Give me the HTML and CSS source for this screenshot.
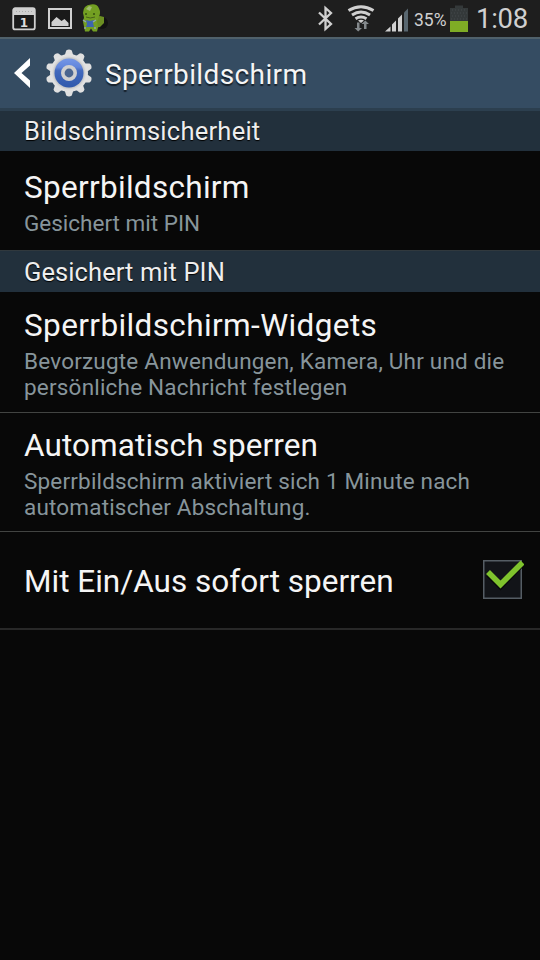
FILE: index.html
```
<!DOCTYPE html>
<html lang="de">
<head>
<meta charset="utf-8">
<title>Sperrbildschirm</title>
<link rel="stylesheet" href="styles.css">
</head>
<body>
<div class="statusbar">
  <svg class="notifications" width="112" height="37" viewBox="0 0 112 37">
    <rect x="13.2" y="8.2" width="21.6" height="21.2" rx="2" fill="#1a1a1a" stroke="#d0d0d0" stroke-width="1.8"/>
    <path d="M13 9h22v6H13z" fill="#d0d0d0"/>
    <path d="M16 11.500h17" stroke="#aaa" stroke-dasharray="1 2"/>
    <text x="24" y="26.500" class="day">1</text>
    <rect x="49" y="9" width="22" height="19" fill="#1a1a1a" stroke="#d0d0d0" stroke-width="2"/>
    <path d="M51.500 26v-4l5-5 5 4 3-2 4 4v3z" fill="#d0d0d0"/>
    <ellipse cx="102" cy="23" rx="6" ry="6" fill="#121212"/>
    <path d="M94 17l6-1 4 1v6l-4 4-5 1z" fill="#6c8f22"/>
    <path d="M83 13q0-8 8-8.500q6-1 8 4 2 4 0 8l-2 5 1 6-1 4h-4l-2-3-2 3h-4l-1-5-1-5 1-4z" fill="#739f22"/>
    <path d="M86 9l3-3 3 1-2 4z" fill="#a2bc72"/>
    <path d="M85 14h2m6 0h2" stroke="#35500f" stroke-width="1.500"/>
    <path d="M86 17q4 2 9 0" stroke="#46601a" fill="none"/>
    <path d="M86 20l4 1 4-1-1 3 1 4h-8l1-3z" fill="#3d65ae"/>
    <path d="M83 20l3 2m7 0l3-2M84 28h2m8 0h2" stroke="#8da4b0" stroke-width="1.500"/>
  </svg>
  <div class="system">
    <svg width="98" height="37" viewBox="0 0 98 37">
      <path d="M7 12.500L19 24l-5.500 5V8l5.500 5L7 24.500" fill="none" stroke="#d0d0d0" stroke-width="2.300"/>
      <g fill="none" stroke="#d0d0d0" stroke-width="3">
        <path d="M36.500 10.500q12.500-7.500 25 0"/>
        <path d="M40 15q9-6 18 0"/>
        <path d="M43.500 18.800q5.500-3.500 11 0"/>
      </g>
      <path d="M46 20.500q3-1.500 6 0l-3 2.500z" fill="#d0d0d0"/>
      <path d="M45 22.500h2.500V28H50l-3.800 3.500-3.700-3.500H45z" fill="#84898c"/>
      <path d="M52 29v-5h-2.500l3.800-3.500L57 24h-2.500v5z" fill="#84898c"/>
      <path d="M73 31.500l5.500-5v5zM80 24.500l4-4v11h-4zM86 18.500l4-4v17h-4z" fill="#d0d0d0"/>
      <path d="M92 12.500l4-4v23h-4z" fill="#596770"/>
    </svg>
    <span class="percent">35%</span>
    <svg class="battery" width="18" height="37" viewBox="0 0 18 37">
      <path d="M0 8h5V5.500h8V8h5v13H0z" fill="#34393a"/>
      <path d="M2 10h15M1 13h16M2 16h15M1 19h16" stroke="#454b4d" stroke-dasharray="1 2"/>
      <path d="M0 21h18v11H0z" fill="#7fac25"/>
    </svg>
    <span class="clock">1:08</span>
  </div>
</div>
<header class="titlebar">
  <svg class="back" width="18" height="32" viewBox="0 0 18 32"><path d="M16 1v7.500L7.500 16l8.500 7.500V31L0 16z" fill="#fff"/></svg>
  <svg class="gear" width="50" height="50" viewBox="-25 -25 50 50">
    <defs>
      <linearGradient id="blue" x2="0" y2="1"><stop offset="0" stop-color="#7597e8"/><stop offset=".3" stop-color="#6286db"/><stop offset=".42" stop-color="#4269bd"/><stop offset="1" stop-color="#3059ac"/></linearGradient>
      <radialGradient id="metal"><stop offset=".7" stop-color="#aeb2b6"/><stop offset=".88" stop-color="#dedede"/><stop offset="1" stop-color="#e4e4e4"/></radialGradient>
      <path id="tooth" d="M-4.500-17L-2.800-22.500Q0-24.500 2.800-22.500L4.500-17z"/>
    </defs>
    <g fill="#e0e0e0">
      <use href="#tooth"/><use href="#tooth" transform="rotate(36)"/><use href="#tooth" transform="rotate(72)"/><use href="#tooth" transform="rotate(108)"/><use href="#tooth" transform="rotate(144)"/><use href="#tooth" transform="rotate(180)"/><use href="#tooth" transform="rotate(216)"/><use href="#tooth" transform="rotate(252)"/><use href="#tooth" transform="rotate(288)"/><use href="#tooth" transform="rotate(324)"/>
    </g>
    <circle r="19" fill="url(#metal)"/>
    <circle r="14.500" fill="url(#blue)"/>
    <circle r="6.200" fill="#4a658f" stroke="#d0d0d0" stroke-width="3.600"/>
  </svg>
  <h1>Sperrbildschirm</h1>
</header>
<main>
  <h2 class="section first">Bildschirmsicherheit</h2>
  <div class="row lock"><h3>Sperrbildschirm</h3><p>Gesichert mit PIN</p></div>
  <h2 class="section">Gesichert mit PIN</h2>
  <div class="row widgets"><h3>Sperrbildschirm-Widgets</h3><p>Bevorzugte Anwendungen, Kamera, Uhr und die<br>persönliche Nachricht festlegen</p></div>
  <div class="row auto"><h3>Automatisch sperren</h3><p>Sperrbildschirm aktiviert sich 1 Minute nach<br>automatischer Abschaltung.</p></div>
  <div class="row instant">
    <h3>Mit Ein/Aus sofort sperren</h3>
    <svg class="checkbox" width="44" height="44" viewBox="0 0 44 44">
      <rect x="3.750" y="2.750" width="37.500" height="37.500" fill="#121418" stroke="#555d64" stroke-width="1.500"/>
      <path d="M8 15L20.500 27.500 42 5" transform="translate(0 1.500)" fill="none" stroke="#080909" stroke-width="5"/>
      <path d="M8 14.500L20.500 27 42.500 5" transform="translate(0 -.5)" fill="none" stroke="#7fc32d" stroke-width="5.500"/>
    </svg>
  </div>
</main>
</body>
</html>
```
FILE: styles.css
```
* { box-sizing: border-box; }
body { margin: 0; width: 540px; height: 960px; overflow: hidden; background: #080808; color: #f5f5f5; font-family: Roboto, sans-serif; }
h1, h2, h3, p { margin: 0; font-weight: 400; white-space: nowrap; }
svg { display: block; flex: none; }
.statusbar { display: flex; justify-content: space-between; height: 37px; background: #1e1e1e; }
.day { font: bold 12px "DejaVu Sans", sans-serif; fill: #ddd; text-anchor: middle; }
.system { display: flex; width: 228px; color: #d0d0d0; line-height: 37px; }
.percent { width: 38px; padding: 2px 0 0 4px; font-size: 17.5px; white-space: nowrap; }
.battery { margin-left: 2px; }
.clock { margin-left: 8px; font-size: 27.5px; letter-spacing: -0.3px; }
.titlebar { display: flex; align-items: center; height: 74px; padding: 0 0 2px 14px; background: #354c62; border-top: 2px solid #50616b; border-bottom: 3px solid #2c3f4f; }
.gear { margin-left: 12px; }
.titlebar h1 { margin: 3px 0 0 11px; font-size: 28px; letter-spacing: 0.38px; text-shadow: 0 2px 1px #17212b; }
.section { height: 42px; padding-left: 24px; border-top: 1px solid #30383d; background: #22303c; font-size: 25.5px; line-height: 42px; letter-spacing: 0.08px; color: #eee; text-shadow: 0 1px 1px #000; }
.section.first { height: 40px; border-top: 0; line-height: 40px; letter-spacing: 0.25px; }
.row { padding: 0 24px; border-bottom: 1px solid #424442; }
.row h3 { font-size: 31.5px; line-height: 36px; }
.row p { margin-top: 4px; font-size: 22.5px; line-height: 26.4px; letter-spacing: 0.18px; color: #87959b; }
.lock { height: 99px; padding-top: 19px; border-bottom: 0; }
.lock h3 { letter-spacing: 0.3px; }
.lock p { letter-spacing: 0; }
.widgets { height: 121px; padding-top: 16px; }
.widgets h3 { letter-spacing: 0.39px; }
.widgets p { letter-spacing: 0.2px; }
.auto { height: 119px; padding-top: 15px; }
.auto h3 { letter-spacing: 0.1px; }
.instant { display: flex; align-items: center; justify-content: space-between; height: 98px; padding: 0 16px 0 24px; border-bottom: 2px solid #282828; }
.instant h3 { padding-top: 3px; }
```
